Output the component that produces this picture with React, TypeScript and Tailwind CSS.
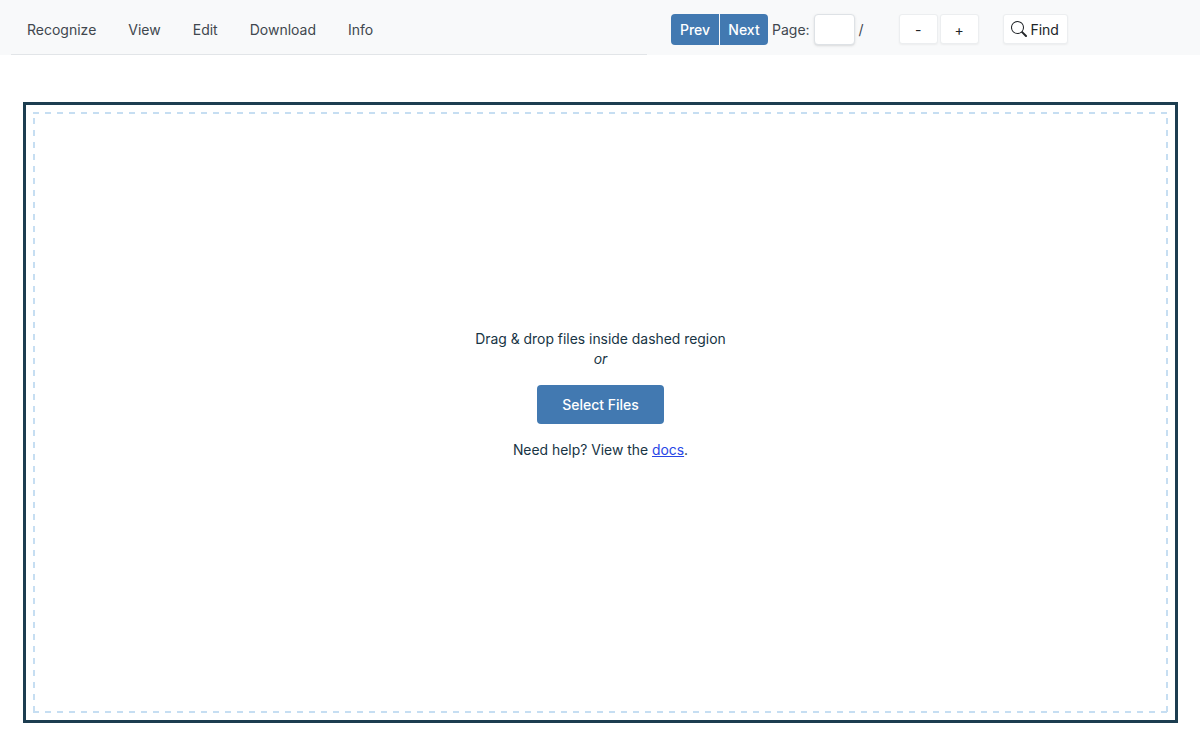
const tabs = ['Recognize', 'View', 'Edit', 'Download', 'Info']

export default function App() {
  return (
    <div className="h-[744px] w-[1200px] overflow-hidden bg-white font-['Inter',sans-serif] text-[14px]">
      <div className="flex h-[55px] bg-[#f8f9fa]">
        <nav className="ml-[11px] flex h-[55px] w-[636px] items-center gap-[32px] border-b border-[#e2e5e8] pl-[16px] pt-[5px] text-[#40474e]">
          {tabs.map((tab) => (
            <span key={tab}>{tab}</span>
          ))}
        </nav>
        <div className="ml-[24px] flex h-[59px] items-center pb-[1px] text-[#40474e]">
          <button className="h-[31px] w-[48px] rounded-l-[4px] bg-[#4279b1] font-medium text-white">Prev</button>
          <button className="ml-px h-[31px] w-[48px] rounded-r-[4px] bg-[#4279b1] font-medium text-white">Next</button>
          <span className="ml-[4px]">Page:</span>
          <input className="ml-[4px] h-[31px] w-[41px] rounded-[4px] border border-[#dee2e6] bg-white shadow-sm" />
          <span className="ml-[4px]">/</span>
          <button className="ml-[35px] h-[30px] w-[39px] rounded-[3px] border border-[#eceef0] bg-white text-[#212529] shadow-xs">-</button>
          <button className="ml-[2px] h-[30px] w-[39px] rounded-[3px] border border-[#eceef0] bg-white text-[#212529] shadow-xs">+</button>
          <button className="ml-[24px] flex h-[30px] w-[65px] items-center justify-center gap-[3px] rounded-[3px] border border-[#eceef0] bg-white text-[#212529] shadow-xs">
            <svg width="16" height="16" viewBox="0 0 16 16" fill="currentColor">
              <path d="M11.742 10.344a6.5 6.5 0 1 0-1.397 1.398h-.001c.03.04.062.078.098.115l3.85 3.85a1 1 0 0 0 1.415-1.414l-3.85-3.85a1.007 1.007 0 0 0-.115-.1zM12 6.5a5.5 5.5 0 1 1-11 0 5.5 5.5 0 0 1 11 0z" />
            </svg>
            Find
          </button>
        </div>
      </div>

      <div className="ml-[23px] mt-[47px] h-[621px] w-[1155px] border-[3px] border-[#1c3d50] p-[7px]">
        <div className="flex h-full w-full flex-col items-center justify-center bg-[linear-gradient(90deg,#c6def2_50%,transparent_50%),linear-gradient(90deg,#c6def2_50%,transparent_50%),linear-gradient(0deg,#c6def2_50%,transparent_50%),linear-gradient(0deg,#c6def2_50%,transparent_50%)] bg-[length:12px_2px,12px_2px,2px_12px,2px_12px] bg-[position:0_0,0_100%,0_0,100%_0] [background-repeat:repeat-x,repeat-x,repeat-y,repeat-y] pb-[37px] text-[13.9px] text-[#173444]">
          <p className="leading-[20px]">Drag &amp; drop files inside dashed region</p>
          <p className="italic leading-[20px]">or</p>
          <button className="mt-[16px] h-[39px] w-[127px] rounded-[4px] bg-[#4279b1] text-[14px] font-medium text-white">Select Files</button>
          <p className="mt-[16px] leading-[20px]">
            Need help? View the <a href="#" className="text-[#2845e6] underline">docs</a>.
          </p>
        </div>
      </div>
    </div>
  )
}
